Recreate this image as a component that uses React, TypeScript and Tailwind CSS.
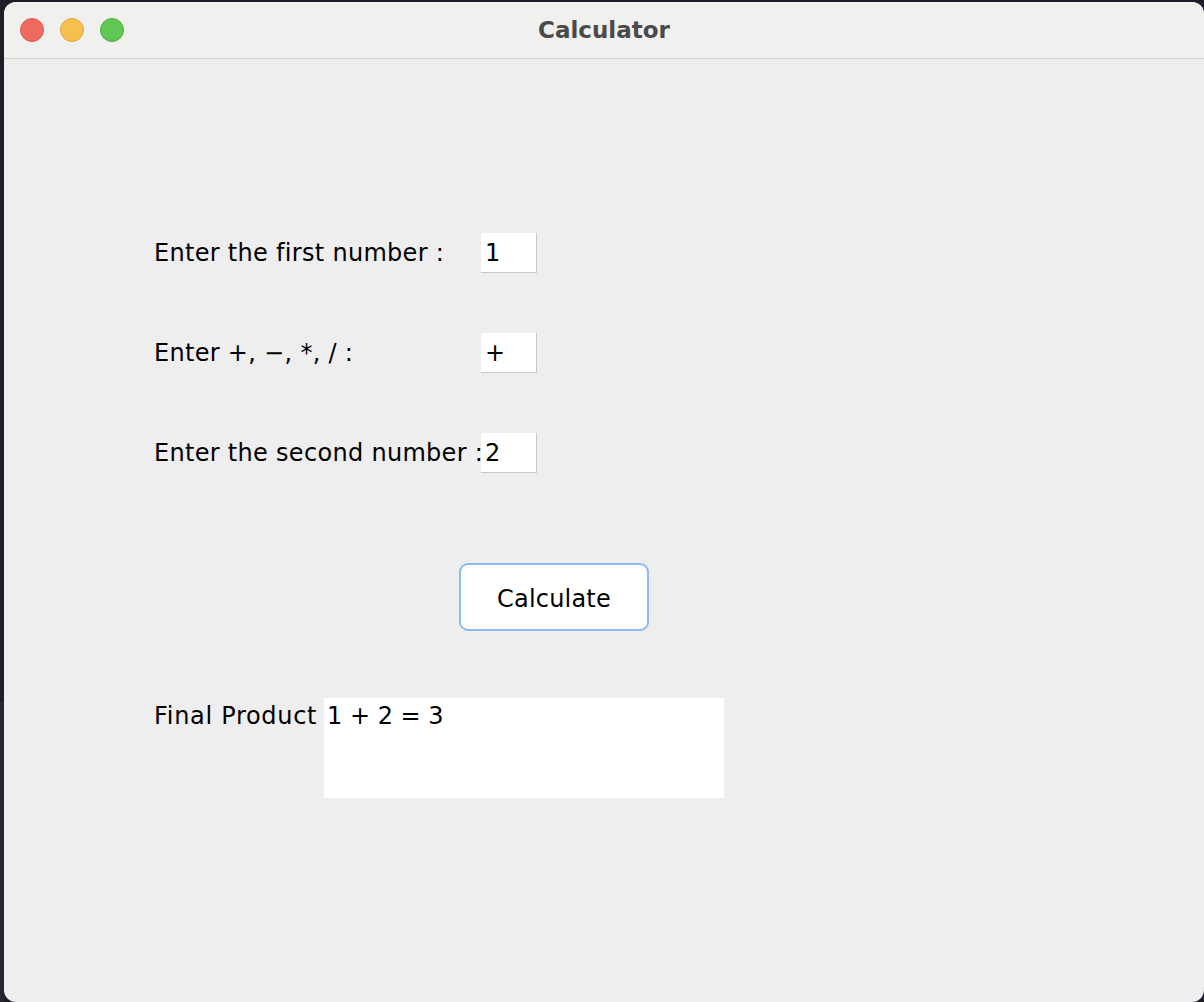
import React from "react";

function Field({ label, value }: { label: string; value: string }) {
  return (
    <div className="flex h-10 items-center">
      <span className="w-[327px] shrink-0 whitespace-nowrap tracking-[0.3px]">{label}</span>
      <div className="flex h-10 w-14 items-center border-b border-r border-[#c8c8c8] bg-white pl-1">
        {value}
      </div>
    </div>
  );
}

export default function App() {
  return (
    <div
      className="flex h-[1002px] w-[1204px] bg-[#1d1e28]"
      style={{ fontFamily: '"DejaVu Sans", "Liberation Sans", sans-serif' }}
    >
      {/* desktop edge */}
      <div className="flex w-1 shrink-0 flex-col">
        <div className="h-[702px] bg-[#1d1e28]" />
        <div className="flex-1 bg-[#262732]" />
      </div>

      <div className="flex flex-1 flex-col pt-[2px]">
        <div className="flex flex-1 flex-col overflow-hidden rounded-[12px] bg-[#eeeeee]">
          {/* title bar */}
          <div className="relative flex h-[57px] shrink-0 items-center border-b border-[#d3d3d3] bg-[#f0f0ee] pl-4">
            <div className="flex gap-4">
              <span className="h-6 w-6 rounded-full border border-[#de5a50] bg-[#ef6b5f]" />
              <span className="h-6 w-6 rounded-full border border-[#dfa63a] bg-[#f6c04f]" />
              <span className="h-6 w-6 rounded-full border border-[#4fae40] bg-[#60c654]" />
            </div>
            <div className="absolute inset-0 flex items-center justify-center text-[23px] font-bold text-[#4a4a4a]">
              Calculator
            </div>
          </div>

          {/* form */}
          <div className="flex flex-col pl-[150px] pt-[174px] text-[24px] text-black">
            <div className="flex flex-col gap-[60px]">
              <Field label="Enter the first number :" value="1" />
              <Field label="Enter +, −, *, / :" value="+" />
              <Field label="Enter the second number :" value="2" />
            </div>

            <button className="ml-[305px] mt-[90px] flex h-[68px] w-[190px] items-center justify-center rounded-[9px] border-2 border-[#8cb9ef] bg-white pt-1 text-[24px] tracking-[0.2px] text-black">
              Calculate
            </button>

            <div className="mt-[67px] flex items-start">
              <span className="w-[170px] shrink-0 whitespace-nowrap tracking-[0.7px]">Final Product</span>
              <div className="h-[100px] w-[400px] bg-white pl-[3px]">1 + 2 = 3</div>
            </div>
          </div>
        </div>
      </div>
    </div>
  );
}
